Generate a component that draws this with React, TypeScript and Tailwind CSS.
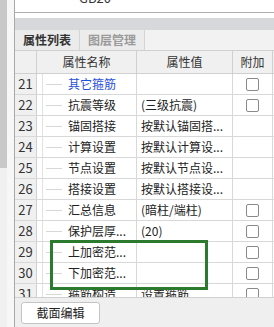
import React from "react";

type Row = { n: number; name: string; value: string; check: boolean; blue?: boolean };

const rows: Row[] = [
  { n: 21, name: "其它箍筋", value: "", check: true, blue: true },
  { n: 22, name: "抗震等级", value: "(三级抗震)", check: true },
  { n: 23, name: "锚固搭接", value: "按默认锚固搭...", check: false },
  { n: 24, name: "计算设置", value: "按默认计算设...", check: false },
  { n: 25, name: "节点设置", value: "按默认节点设...", check: false },
  { n: 26, name: "搭接设置", value: "按默认搭接设...", check: false },
  { n: 27, name: "汇总信息", value: "(暗柱/端柱)", check: true },
  { n: 28, name: "保护层厚...", value: "(20)", check: true },
  { n: 29, name: "上加密范...", value: "", check: true },
  { n: 30, name: "下加密范...", value: "", check: true },
  { n: 31, name: "箍筋构造", value: "设置箍筋", check: true },
];

const font = { fontFamily: '"Noto Sans CJK SC", "Noto Sans", sans-serif' };

function Box() {
  return <div className="w-[13px] h-[13px] border border-[#8a8a8a] rounded-[2px] bg-white" />;
}

export default function App() {
  return (
    <div className="w-[274px] h-[327px] flex bg-white overflow-hidden relative text-[12px] text-[#222]" style={font}>
      <div className="w-[14px] flex shrink-0">
        <div className="w-[7px] flex flex-col bg-[#f0f0f0]">
          <div className="h-[168px] bg-[#c8c8c8]" />
        </div>
        <div className="flex-1 bg-[#f7f7f7]" />
      </div>
      <div className="flex-1 flex flex-col border-l border-[#a9a9a9] min-w-0">
        <div className="h-[13px] border-b border-[#b0b0b0] relative overflow-hidden">
          <div className="absolute left-[64px] top-[-10px] text-[13px] text-[#333] leading-[16px]">GB20</div>
        </div>
        <div className="h-[5px]" />
        <div className="h-[12px] bg-[#d6d8dc]" />
        <div className="h-[20px] flex bg-[#f2f2f2]">
          <div className="w-[65px] flex items-center justify-center bg-[#ebebeb] border-r border-[#d4d4d4] font-bold text-[#333]">属性列表</div>
          <div className="w-[65px] flex items-center justify-center bg-[#ececec] border-r border-[#d4d4d4] font-bold text-[#9a9a9a]">图层管理</div>
        </div>
        <div className="flex-1 relative overflow-hidden border-t border-[#d0d0d0]">
          <div className="flex h-[23px] border-b border-[#d0d0d0] bg-[#f0f0f0] text-[#333]">
            <div className="w-[22px] border-r border-[#d0d0d0]" />
            <div className="w-[100px] border-r border-[#d0d0d0] flex items-center justify-center">属性名称</div>
            <div className="w-[96px] border-r border-[#d0d0d0] flex items-center justify-center">属性值</div>
            <div className="w-[40px] border-r border-[#d0d0d0] flex items-center justify-center">附加</div>
          </div>
          {rows.map((r) => (
            <div key={r.n} className="flex h-[21px] border-b border-[#d8d8d8]">
              <div className="w-[22px] shrink-0 border-r border-[#d0d0d0] bg-[#f0f0f0] flex items-center justify-center text-[13px] text-[#333]">{r.n}</div>
              <div className="w-[100px] shrink-0 border-r border-[#d8d8d8] flex items-center">
                <div className="w-[6px] h-full border-r border-[#e2e2e2]" />
                <div className="w-[16px] ml-[3px] border-t border-[#d8d8d8]" />
                <div className={"ml-[6px] whitespace-nowrap overflow-hidden " + (r.blue ? "text-[#1f4fe0]" : "text-[#222]")}>{r.name}</div>
              </div>
              <div className="w-[96px] shrink-0 border-r border-[#d8d8d8] flex items-center pl-[4px] whitespace-nowrap overflow-hidden">{r.value}</div>
              <div className="w-[40px] shrink-0 border-r border-[#d8d8d8] flex items-center justify-center">{r.check ? <Box /> : null}</div>
            </div>
          ))}
        </div>
        <div className="h-[30px] shrink-0 bg-[#efefef] border-t border-[#d0d0d0] flex items-center pl-[6px]">
          <button className="w-[79px] h-[22px] bg-white border border-[#c4c4c4] rounded-[3px] text-[12px] text-[#222]" style={font}>截面编辑</button>
        </div>
      </div>
      <div className="absolute left-[50px] top-[240px] w-[158px] h-[50px] border-[3px] border-[#2b7a2e]" />
    </div>
  );
}
